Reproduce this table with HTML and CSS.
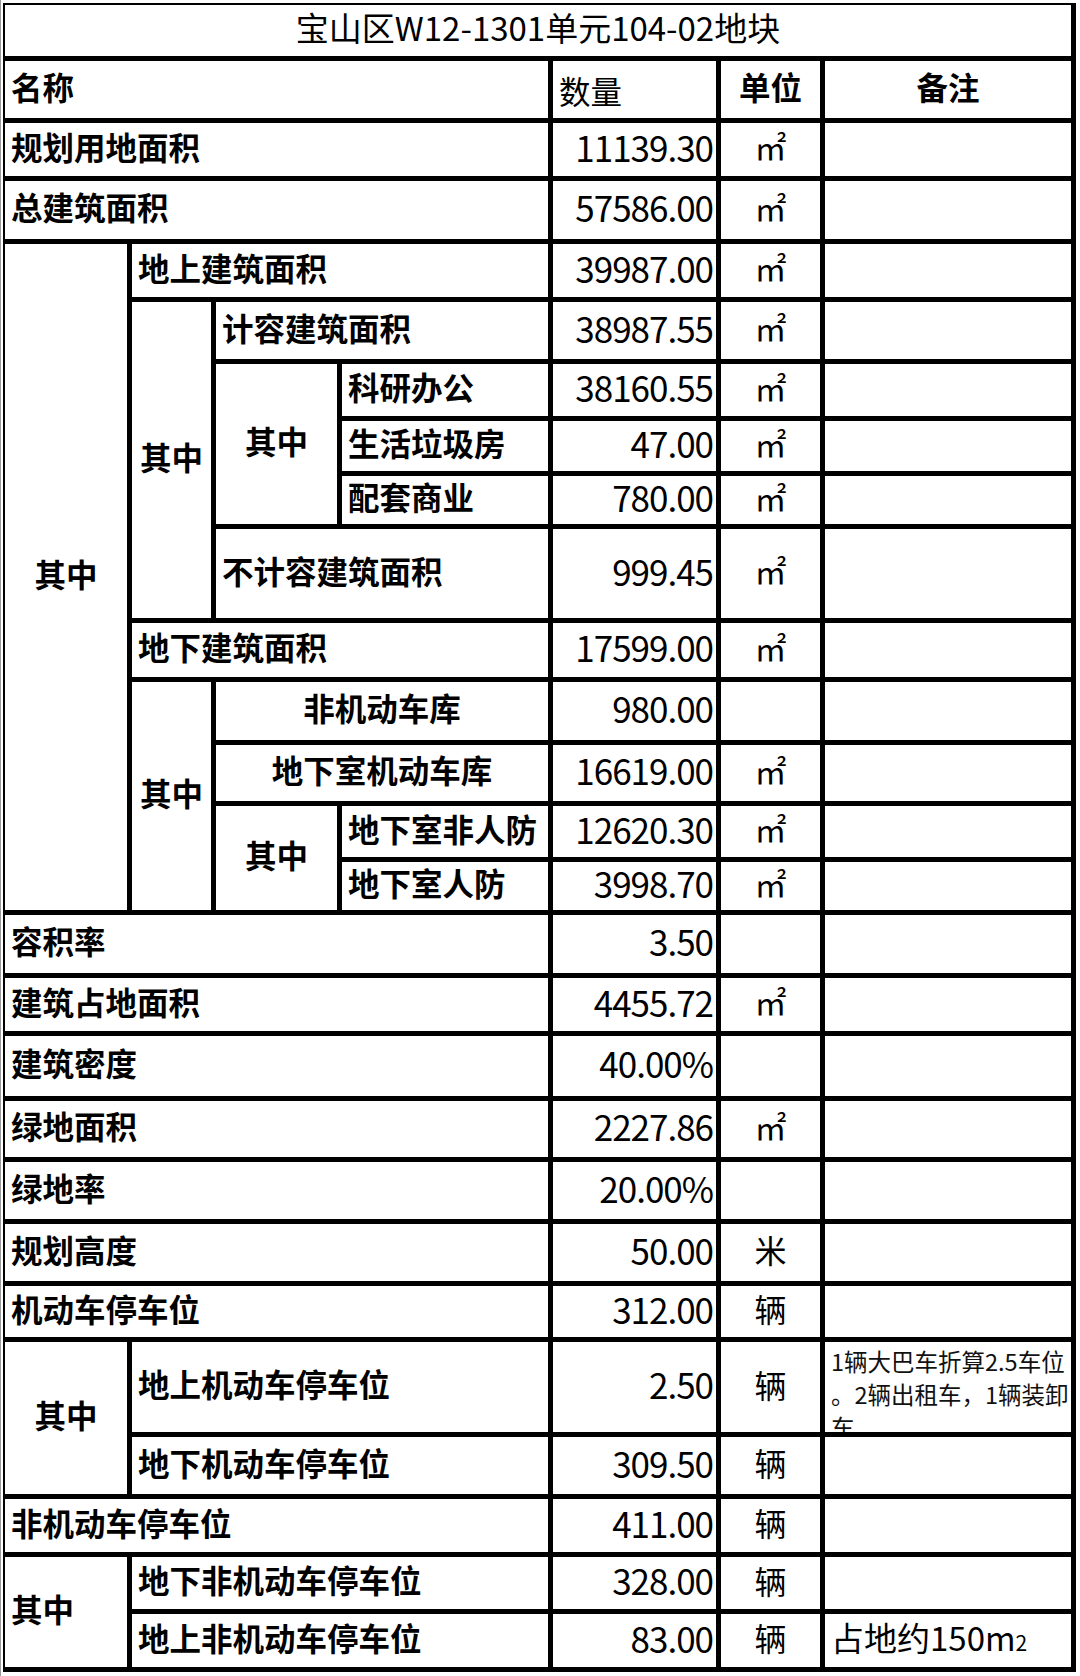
FILE: index.html
```html
<!DOCTYPE html>
<html lang="zh-CN">
<head>
<meta charset="utf-8">
<title>宝山区W12-1301单元104-02地块</title>
<link rel="stylesheet" href="styles.css">
</head>
<body>
<div class="page">
<table class="grid">
  <colgroup>
    <col class="ca"><col class="cb"><col class="cc"><col class="cd"><col class="ce"><col class="cf"><col class="cg">
  </colgroup>
  <tbody>
    <tr class="h56"><td colspan="7" class="title">宝山区W12-1301单元104-02地块</td></tr>
    <tr class="h62">
      <td colspan="4" class="lb">名称</td>
      <td class="qty-head">数量</td>
      <td class="lb c">单位</td>
      <td class="lb c">备注</td>
    </tr>
    <tr class="h58"><td colspan="4" class="lb">规划用地面积</td><td class="num">11139.30</td><td class="u">㎡</td><td></td></tr>
    <tr class="h63"><td colspan="4" class="lb">总建筑面积</td><td class="num">57586.00</td><td class="u">㎡</td><td></td></tr>
    <tr class="h58">
      <td rowspan="11" class="lb c">其中</td>
      <td colspan="3" class="lb">地上建筑面积</td><td class="num">39987.00</td><td class="u">㎡</td><td></td>
    </tr>
    <tr class="h62">
      <td rowspan="5" class="lb c">其中</td>
      <td colspan="2" class="lb">计容建筑面积</td><td class="num">38987.55</td><td class="u">㎡</td><td></td>
    </tr>
    <tr class="h57">
      <td rowspan="3" class="lb c">其中</td>
      <td class="lb">科研办公</td><td class="num">38160.55</td><td class="u">㎡</td><td></td>
    </tr>
    <tr class="h55"><td class="lb">生活垃圾房</td><td class="num">47.00</td><td class="u">㎡</td><td></td></tr>
    <tr class="h53"><td class="lb">配套商业</td><td class="num">780.00</td><td class="u">㎡</td><td></td></tr>
    <tr class="h94"><td colspan="2" class="lb">不计容建筑面积</td><td class="num">999.45</td><td class="u">㎡</td><td></td></tr>
    <tr class="h59"><td colspan="3" class="lb">地下建筑面积</td><td class="num">17599.00</td><td class="u">㎡</td><td></td></tr>
    <tr class="h63">
      <td rowspan="4" class="lb c">其中</td>
      <td colspan="2" class="lb c">非机动车库</td><td class="num">980.00</td><td class="u"></td><td></td>
    </tr>
    <tr class="h61"><td colspan="2" class="lb c">地下室机动车库</td><td class="num">16619.00</td><td class="u">㎡</td><td></td></tr>
    <tr class="h56">
      <td rowspan="2" class="lb c">其中</td>
      <td class="lb">地下室非人防</td><td class="num">12620.30</td><td class="u">㎡</td><td></td>
    </tr>
    <tr class="h53"><td class="lb">地下室人防</td><td class="num">3998.70</td><td class="u">㎡</td><td></td></tr>
    <tr class="h63"><td colspan="4" class="lb">容积率</td><td class="num">3.50</td><td class="u"></td><td></td></tr>
    <tr class="h58"><td colspan="4" class="lb">建筑占地面积</td><td class="num">4455.72</td><td class="u">㎡</td><td></td></tr>
    <tr class="h65"><td colspan="4" class="lb">建筑密度</td><td class="num">40.00%</td><td class="u"></td><td></td></tr>
    <tr class="h61"><td colspan="4" class="lb">绿地面积</td><td class="num">2227.86</td><td class="u">㎡</td><td></td></tr>
    <tr class="h62"><td colspan="4" class="lb">绿地率</td><td class="num">20.00%</td><td class="u"></td><td></td></tr>
    <tr class="h62"><td colspan="4" class="lb">规划高度</td><td class="num">50.00</td><td class="u">米</td><td></td></tr>
    <tr class="h56"><td colspan="4" class="lb">机动车停车位</td><td class="num">312.00</td><td class="u">辆</td><td></td></tr>
    <tr class="h95">
      <td rowspan="2" class="lb c">其中</td>
      <td colspan="3" class="lb">地上机动车停车位</td><td class="num">2.50</td><td class="u">辆</td>
      <td class="note-cell"><div class="note">1辆大巴车折算2.5车位<br>。2辆出租车，1辆装卸<br>车</div></td>
    </tr>
    <tr class="h62"><td colspan="3" class="lb">地下机动车停车位</td><td class="num">309.50</td><td class="u">辆</td><td></td></tr>
    <tr class="h58"><td colspan="4" class="lb">非机动车停车位</td><td class="num">411.00</td><td class="u">辆</td><td></td></tr>
    <tr class="h57">
      <td rowspan="2" class="lb">其中</td>
      <td colspan="3" class="lb">地下非机动车停车位</td><td class="num">328.00</td><td class="u">辆</td><td></td>
    </tr>
    <tr class="h58"><td colspan="3" class="lb">地上非机动车停车位</td><td class="num">83.00</td><td class="u">辆</td><td class="area">占地约150m<span class="sub">2</span></td></tr>
  </tbody>
</table>
</div>
</body>
</html>
```

FILE: styles.css
```css
html, body {
  margin: 0;
  padding: 0;
  background: #fff;
}

body {
  font-family: "Noto Sans CJK SC", "Noto Sans", sans-serif;
  color: #000;
}

.page {
  width: 1080px;
  height: 1676px;
  box-sizing: border-box;
  padding: 3px 0 0 2px;
  border-left: 1px solid #9a9a9a;
}

.grid {
  box-sizing: border-box;
  width: 1073px;
  table-layout: fixed;
  border-collapse: separate;
  border-spacing: 0;
  border-left: 2px solid #000;
  border-top: 2px solid #000;
}

.ca { width: 127px; }
.cb { width: 84px; }
.cc { width: 126px; }
.cd { width: 211px; }
.ce { width: 168px; }
.cf { width: 104px; }
.cg { width: 251px; }

.grid td {
  box-sizing: border-box;
  border-right: 5px solid #000;
  border-bottom: 5px solid #000;
  padding: 0 6px 6px 6px;
  vertical-align: middle;
  line-height: 1.2;
  font-size: 31.5px;
  white-space: nowrap;
}

.h53 { height: 53px; }
.h55 { height: 55px; }
.h56 { height: 56px; }
.h57 { height: 57px; }
.h58 { height: 58px; }
.h59 { height: 59px; }
.h61 { height: 61px; }
.h62 { height: 62px; }
.h63 { height: 63px; }
.h65 { height: 65px; }
.h94 { height: 94px; }
.h95 { height: 95px; }

.grid td.title {
  font-size: 33px;
  font-weight: 400;
  text-align: center;
  padding: 0 0 6px 0;
}

.grid td.lb {
  font-weight: 700;
  text-align: left;
}

.grid td.c {
  text-align: center;
  padding: 0 0 6px 0;
}

.grid td.qty-head {
  font-weight: 400;
  padding-top: 2px;
  padding-bottom: 0;
}

.grid td.num {
  font-size: 35px;
  letter-spacing: -1px;
  text-align: right;
  padding: 0 3px 6px 0;
  font-weight: 400;
}

.grid td.u {
  font-size: 32px;
  text-align: center;
  padding: 0 0 6px 0;
}

.grid td.note-cell {
  vertical-align: top;
  padding: 0 0 0 6px;
}

.note {
  height: 90px;
  overflow: hidden;
  padding-top: 3px;
  box-sizing: border-box;
  font-size: 23.5px;
  line-height: 33px;
  color: #111;
}

.grid td.area {
  font-size: 33px;
  padding-left: 6px;
}

.sub {
  font-size: 21px;
}
```
